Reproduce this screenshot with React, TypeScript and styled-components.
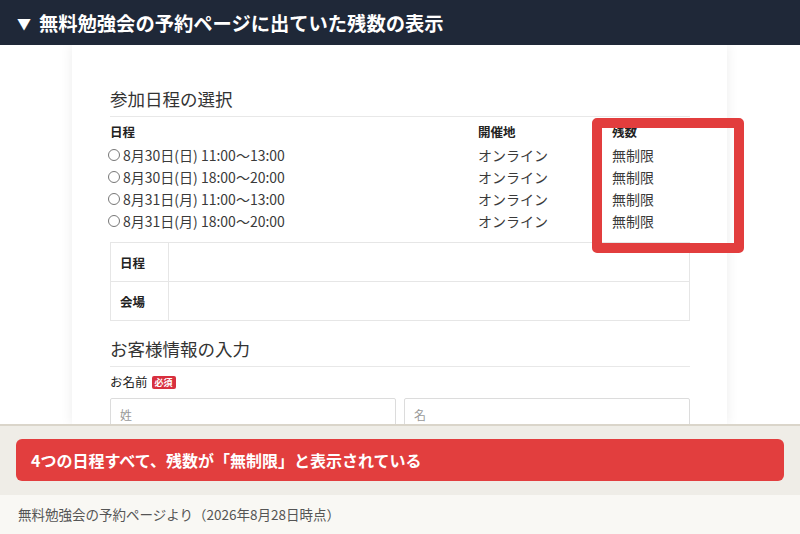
import React from "react";
import styled, { createGlobalStyle } from "styled-components";

const GlobalStyle = createGlobalStyle`
  html, body {
    margin: 0;
    padding: 0;
    background: #ffffff;
  }
  body {
    font-family: "Noto Sans CJK JP", "Noto Sans", sans-serif;
    color: #333;
  }
`;

const Page = styled.div`
  width: 800px;
  height: 534px;
  display: flex;
  flex-direction: column;
  overflow: hidden;
`;

const TitleBar = styled.div`
  height: 45px;
  flex: none;
  background: #1f2838;
  color: #fff;
  display: flex;
  align-items: center;
  padding-left: 17px;
  gap: 8px;
  font-size: 19.3px;
  font-weight: 700;
`;

const Triangle = styled.span`
  font-size: 14px;
`;

const Shot = styled.div`
  flex: 1;
  background: #fff;
  overflow: hidden;
  display: flex;
  padding-left: 72px;
`;

const Card = styled.div`
  position: relative;
  width: 655px;
  background: #fff;
  box-shadow: 0 0 12px rgba(0, 0, 0, 0.08);
  padding: 43px 37px 0 38px;
  box-sizing: border-box;
`;

const SectionTitle = styled.h2`
  margin: 0;
  font-size: 17.5px;
  font-weight: 400;
  color: #333;
  line-height: 22px;
  padding-bottom: 6px;
  border-bottom: 1px solid #e8e8e8;
`;

const ScheduleGrid = styled.div`
  display: grid;
  grid-template-columns: 368px 134px 1fr;
  margin-top: 2px;
  font-size: 14px;
  line-height: 22px;
  color: #3a3a3a;
`;

const HeadCell = styled.div`
  font-size: 12.5px;
  font-weight: 700;
  color: #222;
  line-height: 26px;
  margin-bottom: -1px;
`;

const Cell = styled.div`
  display: flex;
  align-items: center;
  gap: 2px;
`;

const Radio = styled.span`
  width: 10px;
  height: 10px;
  border: 1px solid #777;
  border-radius: 50%;
  margin-left: -2px;
  margin-right: 1px;
`;

const Highlight = styled.div`
  position: absolute;
  left: 520px;
  top: 73px;
  width: 152px;
  height: 135px;
  border: 10px solid #e23d3d;
  border-radius: 5px;
  box-sizing: border-box;
`;

const InfoTable = styled.div`
  margin-top: 10px;
  border: 1px solid #e6e6e6;
  display: grid;
  grid-template-columns: 58px 1fr;
`;

const InfoLabel = styled.div<{ $last?: boolean }>`
  height: 38px;
  display: flex;
  align-items: center;
  padding-left: 9px;
  font-size: 12.5px;
  font-weight: 700;
  color: #222;
  border-right: 1px solid #e6e6e6;
  border-bottom: ${(p) => (p.$last ? "none" : "1px solid #e6e6e6")};
`;

const InfoValue = styled.div<{ $last?: boolean }>`
  border-bottom: ${(p) => (p.$last ? "none" : "1px solid #e6e6e6")};
`;

const SecondTitle = styled(SectionTitle)`
  margin-top: 17px;
`;

const FieldLabel = styled.div`
  margin-top: 5px;
  display: flex;
  align-items: center;
  gap: 4px;
  font-size: 12.5px;
  color: #222;
  line-height: 20px;
`;

const Required = styled.span`
  background: #d8303f;
  color: #fff;
  font-size: 9px;
  font-weight: 700;
  line-height: 13px;
  padding: 0 3px;
  border-radius: 2px;
`;

const InputRow = styled.div`
  margin-top: 6px;
  display: grid;
  grid-template-columns: 1fr 1fr;
  gap: 8px;
`;

const Input = styled.div`
  height: 30px;
  border: 1px solid #dcdcdc;
  border-radius: 2px;
  display: flex;
  align-items: center;
  padding-left: 9px;
  font-size: 12px;
  color: #999;
`;

const Panel = styled.div`
  flex: none;
  border-top: 2px solid #dad5ca;
  background: #efede7;
  padding: 13px 16px 14px;
`;

const Banner = styled.div`
  height: 42px;
  background: #e23e3e;
  border-radius: 6px;
  display: flex;
  align-items: center;
  padding-left: 15px;
  color: #fff;
  font-size: 16px;
  font-weight: 700;
`;

const Caption = styled.div`
  flex: none;
  height: 39px;
  background: #f9f8f4;
  display: flex;
  align-items: center;
  padding-left: 18px;
  font-size: 13.5px;
  color: #555;
  padding-bottom: 2px;
  box-sizing: border-box;
`;

const schedules = [
  "8月30日(日) 11:00〜13:00",
  "8月30日(日) 18:00〜20:00",
  "8月31日(月) 11:00〜13:00",
  "8月31日(月) 18:00〜20:00",
];

const App: React.FC = () => {
  return (
    <Page>
      <GlobalStyle />
      <TitleBar>
        <Triangle>▼</Triangle>
        無料勉強会の予約ページに出ていた残数の表示
      </TitleBar>
      <Shot>
        <Card>
          <SectionTitle>参加日程の選択</SectionTitle>
          <ScheduleGrid>
            <HeadCell>日程</HeadCell>
            <HeadCell>開催地</HeadCell>
            <HeadCell>残数</HeadCell>
            {schedules.map((s) => (
              <React.Fragment key={s}>
                <Cell>
                  <Radio />
                  {s}
                </Cell>
                <Cell>オンライン</Cell>
                <Cell>無制限</Cell>
              </React.Fragment>
            ))}
          </ScheduleGrid>
          <InfoTable>
            <InfoLabel>日程</InfoLabel>
            <InfoValue />
            <InfoLabel $last>会場</InfoLabel>
            <InfoValue $last />
          </InfoTable>
          <SecondTitle>お客様情報の入力</SecondTitle>
          <FieldLabel>
            お名前<Required>必須</Required>
          </FieldLabel>
          <InputRow>
            <Input>姓</Input>
            <Input>名</Input>
          </InputRow>
          <Highlight />
        </Card>
      </Shot>
      <Panel>
        <Banner>4つの日程すべて、残数が「無制限」と表示されている</Banner>
      </Panel>
      <Caption>無料勉強会の予約ページより（2026年8月28日時点）</Caption>
    </Page>
  );
};

export default App;
